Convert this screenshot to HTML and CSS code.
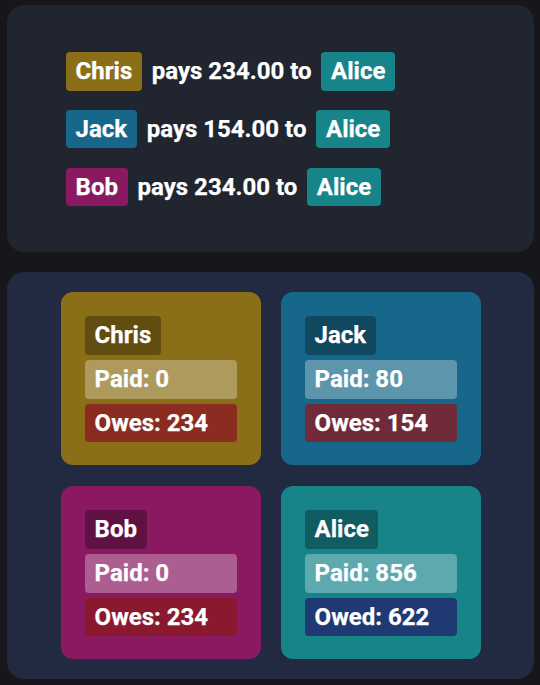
FILE: index.html
```html
<!DOCTYPE html>
<html>
<head>
<meta charset="utf-8">
<link rel="stylesheet" href="styles.css">
</head>
<body>
<div class="page">
  <section class="panel summary">
    <div class="row"><span class="tag gold">Chris</span><span class="txt">pays 234.00 to</span><span class="tag teal">Alice</span></div>
    <div class="row"><span class="tag blue">Jack</span><span class="txt">pays 154.00 to</span><span class="tag teal">Alice</span></div>
    <div class="row"><span class="tag purple">Bob</span><span class="txt">pays 234.00 to</span><span class="tag teal">Alice</span></div>
  </section>
  <section class="panel people">
    <div class="grid">
      <div class="card gold">
        <span class="name">Chris</span>
        <div class="line paid">Paid: 0</div>
        <div class="line owes">Owes: 234</div>
      </div>
      <div class="card blue">
        <span class="name">Jack</span>
        <div class="line paid">Paid: 80</div>
        <div class="line owes">Owes: 154</div>
      </div>
      <div class="card purple">
        <span class="name">Bob</span>
        <div class="line paid">Paid: 0</div>
        <div class="line owes">Owes: 234</div>
      </div>
      <div class="card teal">
        <span class="name">Alice</span>
        <div class="line paid">Paid: 856</div>
        <div class="line owed">Owed: 622</div>
      </div>
    </div>
  </section>
</div>
</body>
</html>
```
FILE: styles.css
```css
html, body {
  margin: 0;
  padding: 0;
  background: #16161b;
}
body {
  font-family: Roboto, "Liberation Sans", sans-serif;
  font-weight: 700;
  font-size: 24px;
  color: #ffffff;
  -webkit-text-stroke: 0.25px #ffffff;
}
.page {
  padding: 5px 6px 6px 7px;
  display: flex;
  flex-direction: column;
  gap: 20px;
}
.panel {
  border-radius: 17px;
}
.summary {
  background: #202530;
  padding: 47px 59px 46px;
  display: flex;
  flex-direction: column;
  gap: 19.3px;
}
.row {
  display: flex;
  align-items: center;
  gap: 10px;
}
.tag {
  padding: 5px 9.6px;
  line-height: 28.5px;
  border-radius: 4px;
}
.txt {
  line-height: 28.5px;
}
.gold { background: #8b6f18; }
.blue { background: #17678a; }
.purple { background: #8a1961; }
.teal { background: #17848a; }

.people {
  background: #222a42;
  padding: 20px 53px 20px 54px;
}
.grid {
  display: grid;
  grid-template-columns: repeat(2, 200px);
  column-gap: 20px;
  row-gap: 21px;
}
.card {
  border-radius: 12px;
  padding: 24px 24px 23px 24px;
  display: flex;
  flex-direction: column;
  align-items: flex-start;
  gap: 5px;
}
.name {
  background: rgba(0, 0, 0, 0.3);
  padding: 5px 9.6px 5.5px;
  line-height: 28.5px;
  border-radius: 4px;
}
.line {
  align-self: stretch;
  padding: 5px 9.6px;
  line-height: 28.5px;
  border-radius: 4px;
}
.paid { background: rgba(255, 255, 255, 0.3); }
.owes { background: rgba(139, 26, 34, 0.78); }
.owed { background: #1f3a73; }
```
